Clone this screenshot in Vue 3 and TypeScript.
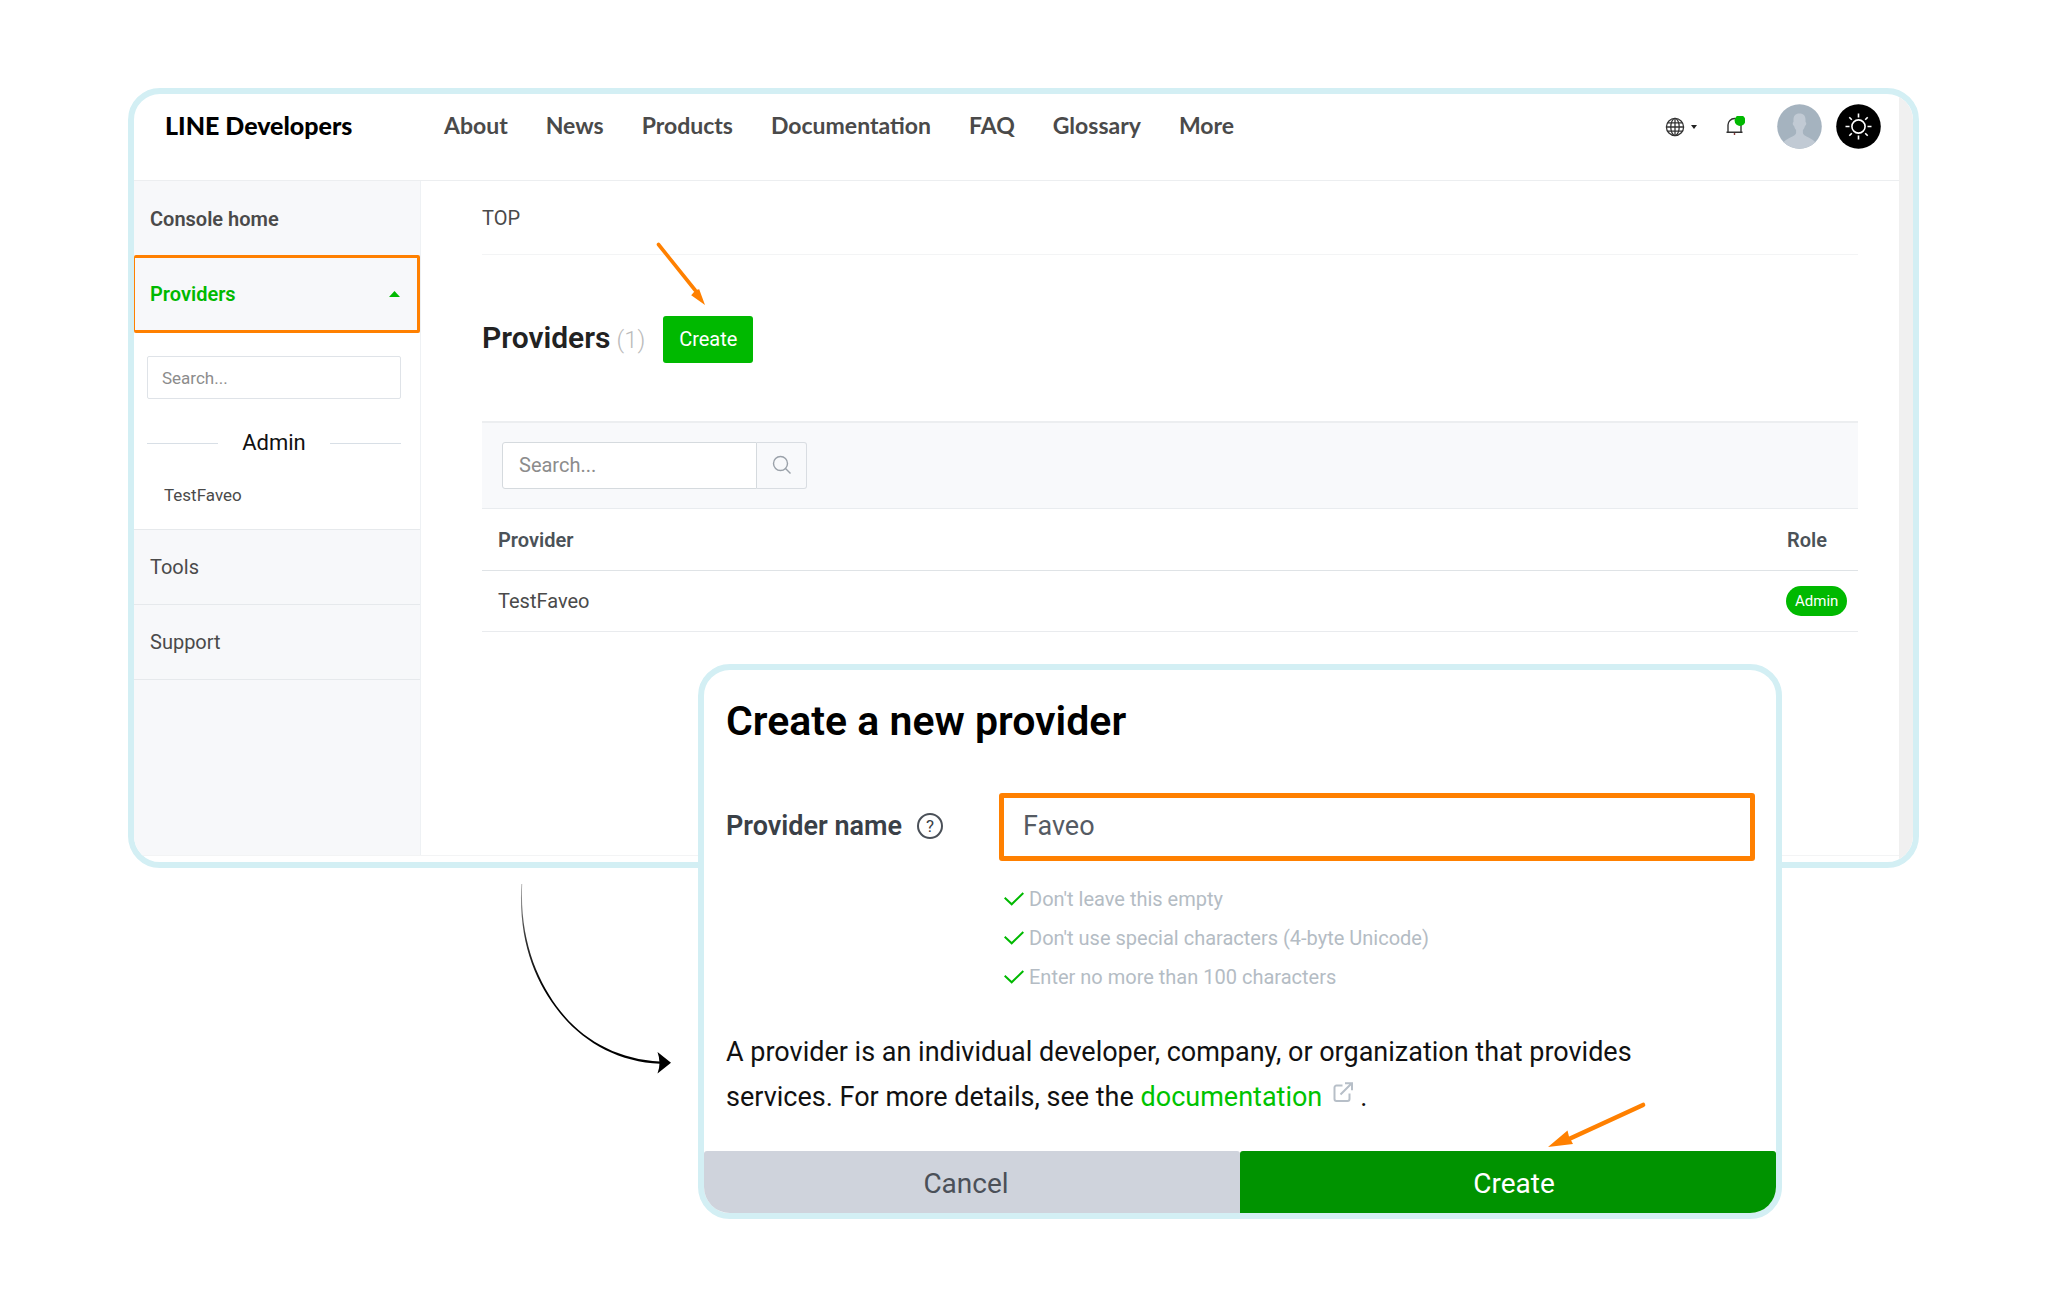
<script setup lang="ts">
import { ref } from 'vue'

interface Provider {
  name: string
  role: string
}

const navLinks: string[] = ['About', 'News', 'Products', 'Documentation', 'FAQ', 'Glossary', 'More']
const providers: Provider[] = [{ name: 'TestFaveo', role: 'Admin' }]
const rules: string[] = [
  "Don't leave this empty",
  "Don't use special characters (4-byte Unicode)",
  'Enter no more than 100 characters',
]

const sideQuery = ref('')
const tableQuery = ref('')
const providerName = ref('Faveo')
</script>

<template>
  <main class="stage">
    <section class="window">
      <div class="content">
        <header class="topbar">
          <a class="logo" href="#">LINE Developers</a>
          <nav class="nav">
            <a v-for="link in navLinks" :key="link" href="#">{{ link }}</a>
          </nav>
          <div class="tools">
            <button class="icon-btn lang" type="button" aria-label="Language">
              <svg width="20" height="20" viewBox="0 0 20 20" fill="none" stroke="#333" stroke-width="1.3">
                <circle cx="10" cy="10" r="8.6" />
                <ellipse cx="10" cy="10" rx="4.2" ry="8.6" />
                <path d="M10 1.4v17.2M1.4 10h17.2M2.8 5.8h14.4M2.8 14.2h14.4" />
              </svg>
              <svg width="6" height="4" viewBox="0 0 6 4"><path d="M0 0h6L3 4z" fill="#222" /></svg>
            </button>
            <button class="icon-btn bell" type="button" aria-label="Notifications">
              <svg width="20" height="22" viewBox="0 0 20 22" fill="none" stroke="#333" stroke-width="1.4">
                <path d="M3 16V9a6.500 6.500 0 0 1 13 0v7" />
                <path d="M1.500 16.200h16" />
                <path d="M9.500 17v2" stroke="#8a3a3a" />
                <circle cx="15" cy="4.500" r="5.400" fill="#00b900" stroke="none" />
              </svg>
            </button>
            <button class="icon-btn" type="button" aria-label="Account">
              <svg width="45" height="45" viewBox="0 0 45 45">
                <defs><clipPath id="face"><circle cx="22.5" cy="22.5" r="22.3" /></clipPath></defs>
                <circle cx="22.5" cy="22.5" r="22.3" fill="#a5b3bf" />
                <path
                  clip-path="url(#face)"
                  fill="#c1cad4"
                  d="M22.5 9.500c4.200 0 6 2.400 6 6.200v2.300c1.200.3.900 3.200-.5 3.800-.4 1.800-1.200 3.200-2.100 4.200v3.200c.4 3 10.600 5.200 13 9.800v8H6v-8c2.400-4.600 12.700-6.800 13.100-9.800V26c-.9-1-1.700-2.400-2.100-4.200-1.400-.6-1.700-3.500-.5-3.800v-2.300c0-3.800 1.800-6.200 6-6.200z"
                />
              </svg>
            </button>
            <button class="icon-btn" type="button" aria-label="Theme">
              <svg width="45" height="45" viewBox="0 0 45 45" fill="none" stroke="#fff" stroke-width="1.6">
                <circle cx="22.500" cy="22.500" r="22.300" fill="#000" stroke="none" />
                <circle cx="22.500" cy="22.500" r="6.600" />
                <path d="M22.500 9.500v4M22.500 31.500v4M9.500 22.500h4M31.500 22.500h4M13.300 13.300l2.500 2.500M29.200 29.200l2.500 2.500M31.700 13.300l-2.500 2.500M15.800 29.200l-2.500 2.500" />
              </svg>
            </button>
          </div>
        </header>

        <div class="body">
          <aside class="sidebar">
            <a class="side-item home" href="#">Console home</a>
            <button class="side-item current" type="button">
              Providers
              <svg width="11" height="6" viewBox="0 0 11 6"><path d="M5.500 0L11 6H0z" fill="#00b900" /></svg>
            </button>
            <div class="submenu">
              <input v-model="sideQuery" type="text" placeholder="Search..." aria-label="Search providers" />
              <div class="group">Admin</div>
              <a class="sub-link" href="#">TestFaveo</a>
            </div>
            <a class="side-item lined" href="#">Tools</a>
            <a class="side-item lined last" href="#">Support</a>
          </aside>

          <div class="main">
            <div class="crumb"><a href="#">TOP</a></div>
            <div class="heading">
              <h1>Providers</h1>
              <span class="count">(1)</span>
              <button class="create" type="button">Create</button>
            </div>
            <form class="filter" @submit.prevent>
              <input v-model="tableQuery" type="text" placeholder="Search..." aria-label="Search table" />
              <button type="submit" aria-label="Search">
                <svg width="20" height="20" viewBox="0 0 20 20" fill="none" stroke="#9aa1a9" stroke-width="1.400">
                  <circle cx="8.500" cy="8.500" r="7" />
                  <path d="M13.500 13.500l5 5" />
                </svg>
              </button>
            </form>
            <table>
              <thead>
                <tr>
                  <th class="name">Provider</th>
                  <th class="role">Role</th>
                </tr>
              </thead>
              <tbody>
                <tr v-for="p in providers" :key="p.name">
                  <td class="name">{{ p.name }}</td>
                  <td class="role"><span class="badge">{{ p.role }}</span></td>
                </tr>
              </tbody>
            </table>
          </div>
        </div>
      </div>
      <div class="scrollbar"></div>
    </section>

    <section class="dialog" role="dialog" aria-labelledby="dialog-title">
      <div class="dialog-body">
        <h2 id="dialog-title">Create a new provider</h2>
        <div class="field">
          <div class="field-label">
            <label for="provider-name">Provider name</label>
            <button class="help" type="button" aria-label="Help">?</button>
          </div>
          <div class="field-control">
            <input id="provider-name" v-model="providerName" type="text" />
            <ul>
              <li v-for="rule in rules" :key="rule">
                <svg width="20" height="14" viewBox="0 0 20 14" fill="none" stroke="#00b900" stroke-width="2">
                  <path d="M.7 5.800L7.700 12.300L19.300 1" />
                </svg>
                {{ rule }}
              </li>
            </ul>
          </div>
        </div>
        <p>
          A provider is an individual developer, company, or organization that provides<br />
          <span>services. For more details, see the </span>
          <a href="#">documentation</a>
          <svg class="ext" width="20" height="20" viewBox="0 0 20 20" fill="none" stroke="#b7bfc8" stroke-width="2">
            <path d="M9.500 3.500H3.500a2 2 0 0 0-2 2V17a2 2 0 0 0 2 2H14.500a2 2 0 0 0 2-2V11.500" />
            <path d="M7.500 12.500L18 2M12 1.200h7v7" />
          </svg>
          <span>.</span>
        </p>
      </div>
      <footer>
        <button class="cancel" type="button">Cancel</button>
        <button class="confirm" type="button">Create</button>
      </footer>
    </section>

    <svg class="pointer pointer-top" width="52" height="66" viewBox="0 0 52 66">
      <path d="M3.500 3.500L40 49" stroke="#ff8000" stroke-width="3.600" stroke-linecap="round" />
      <path d="M50 64L36.200 54.200L39 51L40.500 49L44.200 48.200z" fill="#ff8000" />
    </svg>
    <svg class="pointer pointer-bottom" width="102" height="50" viewBox="0 0 102 50">
      <path d="M96 5L22 39" stroke="#ff8000" stroke-width="4.600" stroke-linecap="round" />
      <path d="M1 47L20.500 30.500L22 36.500L26 44z" fill="#ff8000" />
    </svg>
    <svg class="pointer pointer-flow" width="154" height="194" viewBox="0 0 154 194">
      <defs>
        <linearGradient id="fade" x1="0" y1="0" x2="0" y2="1">
          <stop offset="0" stop-color="#aaa" />
          <stop offset=".3" stop-color="#333" />
          <stop offset=".6" stop-color="#000" />
        </linearGradient>
      </defs>
      <path
        fill="url(#fade)"
        d="M2.400 2C-1 58 16 100 40.500 130.500S100 180 141 181.800V179.500C100 177.500 65 159 41.800 129.500S.5 58 3.200 2z"
      />
      <path d="M152 180.700L138.500 191.500Q142.500 181 138.500 170z" fill="#000" />
    </svg>
  </main>
</template>

<style>
body {
  margin: 0;
  background: #fff;
}
</style>

<style scoped>
.stage {
  position: relative;
  min-height: 100vh;
  box-sizing: border-box;
  padding: 88px 129px 0 128px;
  font-family: Roboto, "Liberation Sans", sans-serif;
  color: #4a4a4a;
}
.stage *,
.stage *::before,
.stage *::after {
  box-sizing: border-box;
}
a {
  color: inherit;
  text-decoration: none;
}
button,
input {
  font: inherit;
  color: inherit;
  margin: 0;
  outline: none;
}
button {
  padding: 0;
  border: 0;
  background: none;
}

.window {
  display: flex;
  border: 6px solid #d3eff4;
  border-radius: 32px;
  overflow: hidden;
  background: #fff;
}
.content {
  flex: 1;
  padding-bottom: 6px;
}
.scrollbar {
  width: 14px;
  background: #f0f0f0;
}

.topbar {
  display: flex;
  align-items: center;
  padding: 10px 18px 31px 31px;
  border-bottom: 1px solid #eceef0;
  font-family: Lato, Roboto, sans-serif;
  font-weight: 700;
}
.logo {
  width: 279px;
  padding-bottom: 3px;
  font-size: 25px;
  font-weight: 900;
  color: #000;
}
.nav {
  display: flex;
  gap: 38px;
  padding-bottom: 3px;
  font-size: 23px;
}
.tools {
  display: flex;
  align-items: center;
  margin-left: auto;
}
.icon-btn {
  display: flex;
  align-items: center;
}
.icon-btn + .icon-btn {
  margin-left: 14px;
}
.lang {
  gap: 6px;
}
.tools .bell {
  margin: 0 18px 0 28px;
}

.body {
  display: flex;
  min-height: 675px;
  border-bottom: 1px solid #f3f4f5;
}
.sidebar {
  width: 287px;
  background: #f7f8fa;
  border-right: 1px solid #eef1f4;
  font-size: 20px;
}
.side-item {
  display: flex;
  align-items: center;
  width: 100%;
  height: 75px;
  padding-left: 16px;
}
.home {
  height: 74px;
  padding-top: 2px;
  font-weight: 600;
}
.current {
  justify-content: space-between;
  height: 78px;
  padding: 0 17px 0 15px;
  border: 3px solid #ff8000;
  border-left-width: 1px;
  border-radius: 2px;
  font-weight: 600;
  color: #00b900;
}
.submenu {
  display: flex;
  flex-direction: column;
  padding: 23px 19px 22px 13px;
  background: #fff;
}
.submenu input {
  height: 43px;
  padding: 0 14px;
  border: 1px solid #dfe3e8;
  border-radius: 2px;
  font-size: 17px;
}
input::placeholder {
  color: #8c8c8c;
  opacity: 1;
}
.group {
  display: flex;
  align-items: center;
  gap: 24px;
  margin: 29px 0 25px;
  font-size: 22px;
  line-height: 30px;
  color: #111;
}
.group::before,
.group::after {
  content: "";
  flex: 1;
  height: 1px;
  background: #d8dfe6;
}
.sub-link {
  padding-left: 17px;
  font-size: 17px;
  line-height: 24px;
}
.lined {
  border-top: 1px solid #e6e9ec;
}
.last {
  height: 76px;
  border-bottom: 1px solid #e6e9ec;
}

.main {
  flex: 1;
  padding: 0 41px 0 61px;
  font-size: 20px;
}
.crumb {
  height: 74px;
  border-bottom: 1px solid #f3f4f5;
  line-height: 74px;
}
.heading {
  display: flex;
  align-items: center;
  padding: 61px 0 58px;
}
h1 {
  margin: 0;
  padding-bottom: 4px;
  font-size: 30px;
  font-weight: 600;
  color: #222;
}
.count {
  margin: 0 18px 0 6px;
  font-size: 24px;
  font-weight: 300;
  color: #bbb;
}
.create {
  width: 90px;
  height: 47px;
  padding-bottom: 1px;
  border-radius: 3px;
  background: #00b900;
  color: #fff;
}
.filter {
  display: flex;
  height: 88px;
  padding: 19px 20px;
  border-top: 2px solid #eceef0;
  border-bottom: 1px solid #e9ecef;
  background: #f8f9fb;
}
.filter input {
  width: 255px;
  height: 47px;
  padding: 0 16px 1px;
  border: 1px solid #d5dade;
  border-radius: 3px 0 0 3px;
  background: #fff;
}
.filter button {
  display: flex;
  align-items: center;
  justify-content: center;
  width: 50px;
  height: 47px;
  padding-bottom: 2px;
  border: 1px solid #d9dde2;
  border-left: 0;
  border-radius: 0 3px 3px 0;
}
table {
  width: 100%;
  border-collapse: separate;
  border-spacing: 0;
}
th,
td {
  height: 61px;
  padding: 0;
  border-bottom: 1px solid #e9ebee;
  text-align: left;
}
th {
  height: 62px;
  border-bottom-color: #dfe3e6;
  font-weight: 600;
  color: #4b5258;
}
.name {
  padding-left: 16px;
}
.role {
  width: 72px;
}
th.role {
  padding-left: 1px;
}
.badge {
  display: inline-block;
  padding: 0 9px;
  border-radius: 15px;
  background: #00b900;
  color: #fff;
  font-size: 15px;
  line-height: 30px;
}

.dialog {
  position: absolute;
  top: 664px;
  left: 698px;
  right: 266px;
  border: 6px solid #d3eff4;
  border-radius: 32px;
  overflow: hidden;
  background: #fff;
  font-size: 27px;
}
.dialog-body {
  padding: 27px 21px 31px 22px;
}
h2 {
  margin: 0 0 48px;
  font-size: 41px;
  font-weight: 600;
  line-height: 48px;
  color: #000;
}
.field {
  display: flex;
}
.field-label {
  display: flex;
  align-items: center;
  gap: 15px;
  width: 273px;
  height: 66px;
  font-weight: 600;
  color: #3a4047;
}
.help {
  width: 26px;
  height: 26px;
  border: 2px solid #4a5058;
  border-radius: 50%;
  font-size: 17px;
  font-weight: 400;
  line-height: 22px;
}
.field-control {
  flex: 1;
}
.field-control input {
  display: block;
  width: 100%;
  height: 68px;
  padding: 0 19px 3px;
  border: 5px solid #ff8000;
  border-radius: 3px;
  background: #fff;
  color: #555b63;
}
ul {
  margin: 19px 0 33px;
  padding: 0 0 0 5px;
  list-style: none;
  font-size: 20px;
  line-height: 39px;
  color: #b4bcc4;
}
li {
  display: flex;
  align-items: center;
  gap: 5px;
}
li svg {
  margin-bottom: 2px;
}
p {
  margin: 0;
  line-height: 45px;
  color: #111;
}
p a {
  color: #00c300;
}
.ext {
  margin: 0 7px 4px 11px;
}
footer {
  display: flex;
  font-size: 28px;
}
footer button {
  flex: 1;
  height: 62px;
  border-radius: 3px 3px 0 0;
}
.cancel {
  padding: 3px 12px 0 0;
  background: #cfd3dc;
  color: #4b5058;
}
.confirm {
  padding: 3px 0 0 12px;
  background: #009300;
  color: #fff;
}

.pointer {
  position: absolute;
  fill: none;
  pointer-events: none;
}
.pointer-top {
  top: 241px;
  left: 655px;
}
.pointer-bottom {
  top: 1100px;
  left: 1547px;
}
.pointer-flow {
  top: 882px;
  left: 519px;
}
</style>
